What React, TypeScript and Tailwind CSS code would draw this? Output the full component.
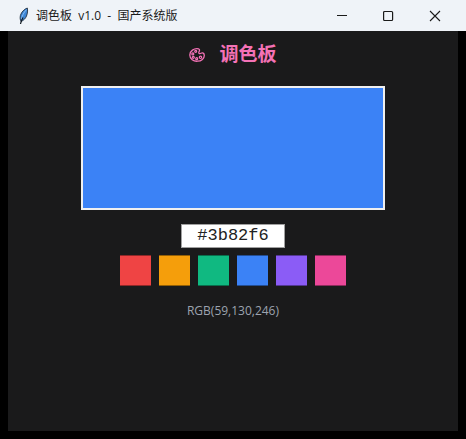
import { useState } from 'react';

const swatches = [
  { name: '红色', value: '#ef4444', className: 'bg-[#ef4444]' },
  { name: '橙色', value: '#f59e0b', className: 'bg-[#f59e0b]' },
  { name: '绿色', value: '#10b981', className: 'bg-[#10b981]' },
  { name: '蓝色', value: '#3b82f6', className: 'bg-[#3b82f6]' },
  { name: '紫色', value: '#8b5cf6', className: 'bg-[#8b5cf6]' },
  { name: '粉色', value: '#ec4899', className: 'bg-[#ec4899]' },
];

const toRgb = (hex: string) => {
  const n = parseInt(hex.slice(1), 16);
  return [(n >> 16) & 255, (n >> 8) & 255, n & 255].join(',');
};

const FeatherIcon = () => {
  return (
    <svg className="h-5 w-3" viewBox="0 0 12 20" aria-hidden="true">
      <path
        d="M9.300 2C6.500 3 3.300 6 2.400 9.500C1.900 11.800 2.200 14 3 15.500C5.500 14.500 7.500 12.500 8.500 10C9.500 7.300 9.900 4.500 9.300 2Z"
        fill="#3d85d6"
        stroke="#22303f"
        strokeWidth="0.9"
      />
      <path d="M8.300 3.800C5.800 6.500 4 10 3.500 13" stroke="#8fc4f5" fill="none" strokeWidth="0.9" />
      <path d="M5 11.500C4.200 13 3 15 2.500 18" stroke="#111a22" fill="none" strokeWidth="1.2" />
    </svg>
  );
};

const PaletteIcon = () => {
  return (
    <svg className="mt-1 h-4 w-4" viewBox="0 0 16 16" fill="none" stroke="#f472b6" aria-hidden="true">
      <path
        d="M9.500 1.800C5 1 .8 4 .8 8C.8 12 4.500 14.500 8.500 14.200C12.500 14 15.300 11.500 15.300 8.500C15.300 6 13.500 5.500 12 6.300C10.500 7.200 9.200 6.300 10 4.800C10.600 3.700 11 2.200 9.500 1.800Z"
        strokeWidth="1.3"
      />
      <g strokeWidth="1.2">
        <circle cx="6.700" cy="4.300" r="1" />
        <circle cx="3.800" cy="6.900" r="1" />
        <circle cx="4.300" cy="10.300" r="1" />
        <circle cx="7.700" cy="11.700" r="1" />
        <circle cx="11.500" cy="10.300" r="1.200" />
      </g>
    </svg>
  );
};

const windowButtonClass = 'flex h-full w-[46px] items-center justify-center hover:bg-slate-200';

interface TitleBarProps {
  title: string;
}
const TitleBar = ({ title }: TitleBarProps) => {
  return (
    <header className="flex h-[31px] items-center bg-[#eff3f8] pl-[18px] text-[#1a1a1a]">
      <FeatherIcon />
      <span className="ml-1.5 flex-1 whitespace-pre text-xs">{title}</span>
      <div className="mr-2 flex h-full">
        <button className={windowButtonClass} aria-label="最小化">
          <svg className="h-3 w-3" viewBox="0 0 12 12" stroke="currentColor" aria-hidden="true">
            <path d="M0 5.500H10" />
          </svg>
        </button>
        <button className={windowButtonClass} aria-label="最大化">
          <svg className="h-3 w-3" viewBox="0 0 12 12" fill="none" stroke="currentColor" aria-hidden="true">
            <rect x="0.600" y="1.500" width="9" height="9" rx="1" strokeWidth="1.200" />
          </svg>
        </button>
        <button className={windowButtonClass} aria-label="关闭">
          <svg className="h-3 w-3" viewBox="0 0 12 12" stroke="currentColor" aria-hidden="true">
            <path d="M1 1L11 11M11 1L1 11" strokeWidth="1.100" />
          </svg>
        </button>
      </div>
    </header>
  );
};

const App = () => {
  const [color, setColor] = useState('#3b82f6');
  const [text, setText] = useState('#3b82f6');

  const selectColor = (value: string) => {
    setColor(value);
    setText(value);
  };

  const handleChange = (e: React.ChangeEvent<HTMLInputElement>) => {
    const { value } = e.target;
    setText(value);
    if (/^#[0-9a-f]{6}$/i.test(value)) {
      setColor(value);
    }
  };

  return (
    <div className="flex min-h-screen flex-col bg-black font-['Open_Sans','Noto_Sans_CJK_SC',sans-serif]">
      <TitleBar title="调色板  v1.0  -  国产系统版" />

      <main className="mx-2 mb-2 flex flex-1 flex-col items-center bg-[#1a1a1b] pt-2">
        <h1 className="flex h-7 items-center gap-3.5 font-['Noto_Sans_CJK_SC',sans-serif] text-[19px] font-bold text-[#f472b6]">
          <PaletteIcon />
          调色板
        </h1>

        <div
          className="mt-[19px] h-[124px] w-[304px] max-w-full border-2 border-[#f0f0f0]"
          style={{ backgroundColor: color }}
        />

        <input
          type="text"
          aria-label="颜色值"
          className="mt-3.5 h-6 w-[104px] border border-[#a0a0a0] bg-white text-center font-['Liberation_Mono',monospace] text-[17px] text-[#222222] outline-none"
          value={text}
          onChange={handleChange}
        />

        <div className="mt-[7px] flex gap-2">
          {swatches.map((swatch) => (
            <button
              key={swatch.value}
              aria-label={swatch.name}
              className={`h-[31px] w-[31px] cursor-pointer border-y border-black/40 ${swatch.className}`}
              onClick={() => selectColor(swatch.value)}
            />
          ))}
        </div>

        <p className="mt-[17px] text-xs text-[#9ca3af]">RGB({toRgb(color)})</p>
      </main>
    </div>
  );
};

export default App;
